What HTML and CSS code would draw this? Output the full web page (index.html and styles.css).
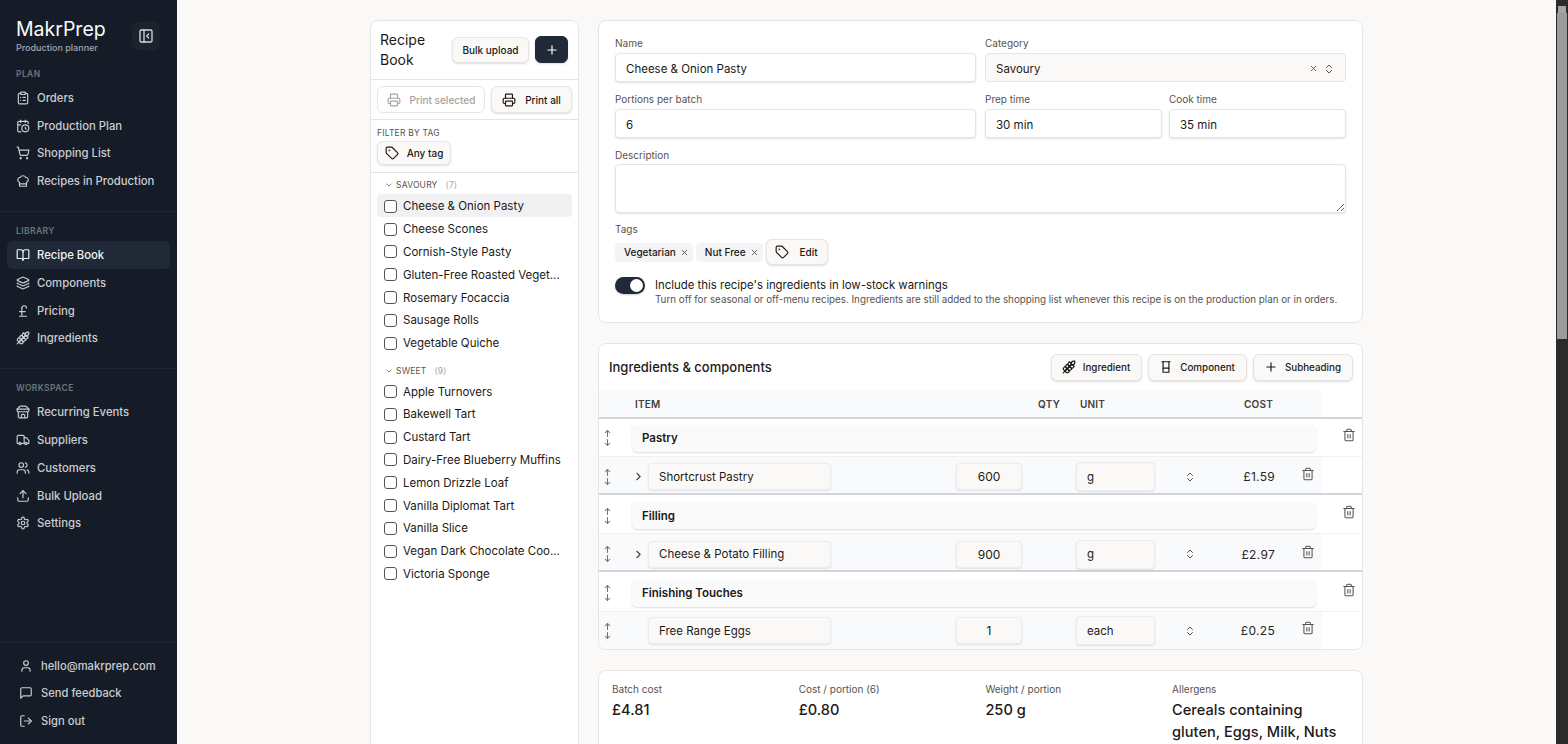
FILE: index.html
```html
<!DOCTYPE html>
<html lang="en">
<head>
    <meta charset="UTF-8">
    <title>MakrPrep - Recipe Book</title>
    <link rel="stylesheet" href="styles.css">
</head>
<body>
    <!-- Icon sprite -->
    <svg class="sprite" xmlns="http://www.w3.org/2000/svg">
        <symbol id="i-orders" viewBox="0 0 24 24"><rect x="8" y="2" width="8" height="4" rx="1"/><path d="M16 4h2a2 2 0 0 1 2 2v14a2 2 0 0 1-2 2H6a2 2 0 0 1-2-2V6a2 2 0 0 1 2-2h2"/><path d="M12 11h4M12 16h4M8 11h.01M8 16h.01"/></symbol>
        <symbol id="i-plan" viewBox="0 0 24 24"><path d="M21 7.5V6a2 2 0 0 0-2-2H5a2 2 0 0 0-2 2v14a2 2 0 0 0 2 2h3.5"/><path d="M16 2v4M8 2v4M3 10h5"/><path d="M17.5 17.5 16 16.3V14"/><circle cx="16" cy="16" r="6"/></symbol>
        <symbol id="i-cart" viewBox="0 0 24 24"><circle cx="8" cy="21" r="1"/><circle cx="19" cy="21" r="1"/><path d="M2.05 2.05h2l2.66 12.42a2 2 0 0 0 2 1.58h9.78a2 2 0 0 0 1.95-1.57l1.65-7.43H5.12"/></symbol>
        <symbol id="i-chef" viewBox="0 0 24 24"><path d="M17 21a1 1 0 0 0 1-1v-5.35c0-.457.316-.844.727-1.041a4 4 0 0 0-2.134-7.589 5 5 0 0 0-9.186 0 4 4 0 0 0-2.134 7.588c.411.198.727.585.727 1.041V20a1 1 0 0 0 1 1Z"/><path d="M6 17h12"/></symbol>
        <symbol id="i-book" viewBox="0 0 24 24"><path d="M12 7v14"/><path d="M3 18a1 1 0 0 1-1-1V4a1 1 0 0 1 1-1h5a4 4 0 0 1 4 4 4 4 0 0 1 4-4h5a1 1 0 0 1 1 1v13a1 1 0 0 1-1 1h-6a3 3 0 0 0-3 3 3 3 0 0 0-3-3z"/></symbol>
        <symbol id="i-layers" viewBox="0 0 24 24"><path d="M12.83 2.18a2 2 0 0 0-1.66 0L2.6 6.08a1 1 0 0 0 0 1.83l8.58 3.91a2 2 0 0 0 1.66 0l8.58-3.9a1 1 0 0 0 0-1.83z"/><path d="M2 12a1 1 0 0 0 .58.91l8.6 3.91a2 2 0 0 0 1.65 0l8.58-3.9A1 1 0 0 0 22 12"/><path d="M2 17a1 1 0 0 0 .58.91l8.6 3.91a2 2 0 0 0 1.65 0l8.58-3.9A1 1 0 0 0 22 17"/></symbol>
        <symbol id="i-pound" viewBox="0 0 24 24"><path d="M18 7c0-5.333-8-5.333-8 0"/><path d="M10 7v14M6 21h12M6 13h10"/></symbol>
        <symbol id="i-wheat" viewBox="0 0 24 24"><path d="M2 22 16 8"/><path d="M3.47 12.53 5 11l1.53 1.53a3.5 3.5 0 0 1 0 4.94L5 19l-1.53-1.53a3.5 3.5 0 0 1 0-4.94Z"/><path d="M7.47 8.53 9 7l1.53 1.53a3.5 3.5 0 0 1 0 4.94L9 15l-1.53-1.53a3.5 3.5 0 0 1 0-4.94Z"/><path d="M11.47 4.53 13 3l1.53 1.53a3.5 3.5 0 0 1 0 4.94L13 11l-1.53-1.53a3.5 3.5 0 0 1 0-4.94Z"/><path d="M20 2h2v2a4 4 0 0 1-4 4h-2V6a4 4 0 0 1 4-4Z"/><path d="M11.47 17.47 13 19l-1.53 1.53a3.5 3.5 0 0 1-4.94 0L5 19l1.53-1.53a3.5 3.5 0 0 1 4.94 0Z"/><path d="M15.47 13.47 17 15l-1.53 1.53a3.5 3.5 0 0 1-4.94 0L9 15l1.53-1.53a3.5 3.5 0 0 1 4.94 0Z"/><path d="M19.47 9.47 21 11l-1.53 1.53a3.5 3.5 0 0 1-4.94 0L13 11l1.53-1.53a3.5 3.5 0 0 1 4.94 0Z"/></symbol>
        <symbol id="i-store" viewBox="0 0 24 24"><path d="m2 7 4.41-4.41A2 2 0 0 1 7.83 2h8.34a2 2 0 0 1 1.42.59L22 7"/><path d="M4 12v8a2 2 0 0 0 2 2h12a2 2 0 0 0 2-2v-8"/><path d="M15 22v-4a2 2 0 0 0-2-2h-2a2 2 0 0 0-2 2v4"/><path d="M2 7h20"/><path d="M22 7v3a2 2 0 0 1-2 2a2.7 2.7 0 0 1-1.59-.63.7.7 0 0 0-.82 0A2.7 2.7 0 0 1 16 12a2.7 2.7 0 0 1-1.59-.63.7.7 0 0 0-.82 0A2.7 2.7 0 0 1 12 12a2.7 2.7 0 0 1-1.59-.63.7.7 0 0 0-.82 0A2.7 2.7 0 0 1 8 12a2.7 2.7 0 0 1-1.59-.63.7.7 0 0 0-.82 0A2.7 2.7 0 0 1 4 12a2 2 0 0 1-2-2V7"/></symbol>
        <symbol id="i-truck" viewBox="0 0 24 24"><path d="M14 18V6a2 2 0 0 0-2-2H4a2 2 0 0 0-2 2v11a1 1 0 0 0 1 1h2"/><path d="M15 18H9"/><path d="M19 18h2a1 1 0 0 0 1-1v-3.65a1 1 0 0 0-.22-.624l-3.48-4.35A1 1 0 0 0 17.52 8H14"/><circle cx="17" cy="18" r="2"/><circle cx="7" cy="18" r="2"/></symbol>
        <symbol id="i-users" viewBox="0 0 24 24"><path d="M16 21v-2a4 4 0 0 0-4-4H6a4 4 0 0 0-4 4v2"/><circle cx="9" cy="7" r="4"/><path d="M22 21v-2a4 4 0 0 0-3-3.87"/><path d="M16 3.13a4 4 0 0 1 0 7.75"/></symbol>
        <symbol id="i-upload" viewBox="0 0 24 24"><path d="M21 15v4a2 2 0 0 1-2 2H5a2 2 0 0 1-2-2v-4"/><path d="M17 8l-5-5-5 5"/><path d="M12 3v12"/></symbol>
        <symbol id="i-settings" viewBox="0 0 24 24"><path d="M12.22 2h-.44a2 2 0 0 0-2 2v.18a2 2 0 0 1-1 1.73l-.43.25a2 2 0 0 1-2 0l-.15-.08a2 2 0 0 0-2.73.73l-.22.38a2 2 0 0 0 .73 2.73l.15.1a2 2 0 0 1 1 1.72v.51a2 2 0 0 1-1 1.74l-.15.09a2 2 0 0 0-.73 2.73l.22.38a2 2 0 0 0 2.73.73l.15-.08a2 2 0 0 1 2 0l.43.25a2 2 0 0 1 1 1.73V20a2 2 0 0 0 2 2h.44a2 2 0 0 0 2-2v-.18a2 2 0 0 1 1-1.73l.43-.25a2 2 0 0 1 2 0l.15.08a2 2 0 0 0 2.73-.73l.22-.39a2 2 0 0 0-.73-2.73l-.15-.08a2 2 0 0 1-1-1.74v-.5a2 2 0 0 1 1-1.74l.15-.09a2 2 0 0 0 .73-2.73l-.22-.38a2 2 0 0 0-2.73-.73l-.15.08a2 2 0 0 1-2 0l-.43-.25a2 2 0 0 1-1-1.73V4a2 2 0 0 0-2-2z"/><circle cx="12" cy="12" r="3"/></symbol>
        <symbol id="i-user" viewBox="0 0 24 24"><path d="M19 21v-2a4 4 0 0 0-4-4H9a4 4 0 0 0-4 4v2"/><circle cx="12" cy="7" r="4"/></symbol>
        <symbol id="i-message" viewBox="0 0 24 24"><path d="M21 15a2 2 0 0 1-2 2H7l-4 4V5a2 2 0 0 1 2-2h14a2 2 0 0 1 2 2z"/></symbol>
        <symbol id="i-logout" viewBox="0 0 24 24"><path d="M9 21H5a2 2 0 0 1-2-2V5a2 2 0 0 1 2-2h4"/><path d="M16 17l5-5-5-5"/><path d="M21 12H9"/></symbol>
        <symbol id="i-panel" viewBox="0 0 24 24"><rect x="3" y="3" width="18" height="18" rx="2"/><path d="M9 3v18"/><path d="m16 15-3-3 3-3"/></symbol>
        <symbol id="i-printer" viewBox="0 0 24 24"><path d="M6 18H4a2 2 0 0 1-2-2v-5a2 2 0 0 1 2-2h16a2 2 0 0 1 2 2v5a2 2 0 0 1-2 2h-2"/><path d="M6 9V3a1 1 0 0 1 1-1h10a1 1 0 0 1 1 1v6"/><rect x="6" y="14" width="12" height="8" rx="1"/></symbol>
        <symbol id="i-tag" viewBox="0 0 24 24"><path d="M12.586 2.586A2 2 0 0 0 11.172 2H4a2 2 0 0 0-2 2v7.172a2 2 0 0 0 .586 1.414l8.704 8.704a2.426 2.426 0 0 0 3.42 0l6.58-6.58a2.426 2.426 0 0 0 0-3.42z"/><circle cx="7.5" cy="7.5" r=".5"/></symbol>
        <symbol id="i-trash" viewBox="0 0 24 24"><path d="M3 6h18"/><path d="M19 6v14c0 1-1 2-2 2H7c-1 0-2-1-2-2V6"/><path d="M8 6V4c0-1 1-2 2-2h4c1 0 2 1 2 2v2"/><path d="M10 11v6M14 11v6"/></symbol>
        <symbol id="i-updown" viewBox="0 0 24 24"><path d="m7 15 5 5 5-5"/><path d="m7 9 5-5 5 5"/></symbol>
        <symbol id="i-plus" viewBox="0 0 24 24"><path d="M5 12h14M12 5v14"/></symbol>
        <symbol id="i-x" viewBox="0 0 24 24"><path d="M18 6 6 18M6 6l12 12"/></symbol>
        <symbol id="i-down" viewBox="0 0 24 24"><path d="m6 9 6 6 6-6"/></symbol>
        <symbol id="i-right" viewBox="0 0 24 24"><path d="m9 18 6-6-6-6"/></symbol>
        <symbol id="i-cup" viewBox="0 0 24 24"><path d="M5 3h14"/><path d="M7 3v18h10V3"/><path d="M7 14h10"/></symbol>
        <symbol id="i-arrow-up" viewBox="0 0 24 24"><path d="m6 10 6-6 6 6"/><path d="M12 20V4"/></symbol>
        <symbol id="i-arrow-down" viewBox="0 0 24 24"><path d="M12 4v16"/><path d="m18 14-6 6-6-6"/></symbol>
    </svg>

    <div class="app">
        <aside class="sidebar">
            <div class="brand">
                <div>
                    <div class="brand-name">MakrPrep</div>
                    <div class="brand-sub">Production planner</div>
                </div>
                <button class="collapse"><svg class="ic"><use href="#i-panel"/></svg></button>
            </div>

            <div class="nav-group">
                <div class="nav-title">PLAN</div>
                <a class="nav-item"><svg class="ic"><use href="#i-orders"/></svg>Orders</a>
                <a class="nav-item"><svg class="ic"><use href="#i-plan"/></svg>Production Plan</a>
                <a class="nav-item"><svg class="ic"><use href="#i-cart"/></svg>Shopping List</a>
                <a class="nav-item"><svg class="ic"><use href="#i-chef"/></svg>Recipes in Production</a>
            </div>
            <div class="nav-group nav-divided">
                <div class="nav-title">LIBRARY</div>
                <a class="nav-item active"><svg class="ic"><use href="#i-book"/></svg>Recipe Book</a>
                <a class="nav-item"><svg class="ic"><use href="#i-layers"/></svg>Components</a>
                <a class="nav-item"><svg class="ic"><use href="#i-pound"/></svg>Pricing</a>
                <a class="nav-item"><svg class="ic"><use href="#i-wheat"/></svg>Ingredients</a>
            </div>
            <div class="nav-group nav-divided">
                <div class="nav-title">WORKSPACE</div>
                <a class="nav-item"><svg class="ic"><use href="#i-store"/></svg>Recurring Events</a>
                <a class="nav-item"><svg class="ic"><use href="#i-truck"/></svg>Suppliers</a>
                <a class="nav-item"><svg class="ic"><use href="#i-users"/></svg>Customers</a>
                <a class="nav-item"><svg class="ic"><use href="#i-upload"/></svg>Bulk Upload</a>
                <a class="nav-item"><svg class="ic"><use href="#i-settings"/></svg>Settings</a>
            </div>

            <div class="side-footer">
                <a class="foot-item"><svg class="ic"><use href="#i-user"/></svg>hello@makrprep.com</a>
                <a class="foot-item"><svg class="ic"><use href="#i-message"/></svg>Send feedback</a>
                <a class="foot-item"><svg class="ic"><use href="#i-logout"/></svg>Sign out</a>
            </div>
        </aside>

        <main class="main">
            <div class="content">
                <section class="list-panel">
                    <div class="list-head">
                        <h2>Recipe Book</h2>
                        <button class="btn btn-bulk">Bulk upload</button>
                        <button class="btn btn-dark"><svg class="ic"><use href="#i-plus"/></svg></button>
                    </div>
                    <div class="print-row">
                        <button class="btn btn-print disabled"><svg class="ic"><use href="#i-printer"/></svg>Print selected</button>
                        <button class="btn btn-print"><svg class="ic"><use href="#i-printer"/></svg>Print all</button>
                    </div>
                    <div class="tag-filter">
                        <div class="filter-label">FILTER BY TAG</div>
                        <button class="btn btn-tag"><svg class="ic"><use href="#i-tag"/></svg>Any tag</button>
                    </div>
                    <div class="recipes">
                        <div class="cat-head"><svg class="ic"><use href="#i-down"/></svg>SAVOURY <span>(7)</span></div>
                        <div class="recipe selected"><i class="check"></i>Cheese &amp; Onion Pasty</div>
                        <div class="recipe"><i class="check"></i>Cheese Scones</div>
                        <div class="recipe"><i class="check"></i>Cornish-Style Pasty</div>
                        <div class="recipe"><i class="check"></i>Gluten-Free Roasted Veget...</div>
                        <div class="recipe"><i class="check"></i>Rosemary Focaccia</div>
                        <div class="recipe"><i class="check"></i>Sausage Rolls</div>
                        <div class="recipe"><i class="check"></i>Vegetable Quiche</div>
                        <div class="cat-head cat-next"><svg class="ic"><use href="#i-down"/></svg>SWEET <span>(9)</span></div>
                        <div class="recipe"><i class="check"></i>Apple Turnovers</div>
                        <div class="recipe"><i class="check"></i>Bakewell Tart</div>
                        <div class="recipe"><i class="check"></i>Custard Tart</div>
                        <div class="recipe"><i class="check"></i>Dairy-Free Blueberry Muffins</div>
                        <div class="recipe"><i class="check"></i>Lemon Drizzle Loaf</div>
                        <div class="recipe"><i class="check"></i>Vanilla Diplomat Tart</div>
                        <div class="recipe"><i class="check"></i>Vanilla Slice</div>
                        <div class="recipe"><i class="check"></i>Vegan Dark Chocolate Coo...</div>
                        <div class="recipe"><i class="check"></i>Victoria Sponge</div>
                    </div>
                </section>

                <div class="detail">
                    <section class="card form-card">
                        <div class="form-row">
                            <label class="field"><span>Name</span><input class="input" value="Cheese &amp; Onion Pasty"></label>
                            <div class="field"><span>Category</span>
                                <div class="input select">Savoury
                                    <svg class="ic ic-x"><use href="#i-x"/></svg>
                                    <svg class="ic ic-updown"><use href="#i-updown"/></svg>
                                </div>
                            </div>
                        </div>
                        <div class="form-row">
                            <label class="field"><span>Portions per batch</span><input class="input" value="6"></label>
                            <div class="time-pair">
                                <label class="field"><span>Prep time</span><input class="input" value="30 min"></label>
                                <label class="field"><span>Cook time</span><input class="input" value="35 min"></label>
                            </div>
                        </div>
                        <label class="field field-desc"><span>Description</span><textarea class="input desc"></textarea></label>
                        <div class="field"><span>Tags</span>
                            <div class="tags">
                                <div class="tag">Vegetarian <svg class="ic"><use href="#i-x"/></svg></div>
                                <div class="tag">Nut Free <svg class="ic"><use href="#i-x"/></svg></div>
                                <button class="btn btn-edit"><svg class="ic"><use href="#i-tag"/></svg>Edit</button>
                            </div>
                        </div>
                        <div class="stock">
                            <div class="toggle"><b></b></div>
                            <div>
                                <div class="stock-title">Include this recipe's ingredients in low-stock warnings</div>
                                <div class="stock-note">Turn off for seasonal or off-menu recipes. Ingredients are still added to the shopping list whenever this recipe is on the production plan or in orders.</div>
                            </div>
                        </div>
                    </section>

                    <section class="card table-card">
                        <div class="table-top">
                            <h3>Ingredients &amp; components</h3>
                            <button class="btn btn-add"><svg class="ic"><use href="#i-wheat"/></svg>Ingredient</button>
                            <button class="btn btn-add"><svg class="ic"><use href="#i-cup"/></svg>Component</button>
                            <button class="btn btn-add"><svg class="ic"><use href="#i-plus"/></svg>Subheading</button>
                        </div>
                        <div class="table-head">
                            <div class="th-item">ITEM</div>
                            <div class="th-qty">QTY</div>
                            <div class="th-unit">UNIT</div>
                            <div class="th-cost">COST</div>
                        </div>

                        <div class="sub-row">
                            <div class="arrows"><svg class="ic"><use href="#i-arrow-up"/></svg><svg class="ic"><use href="#i-arrow-down"/></svg></div>
                            <div class="sub-input">Pastry</div>
                            <svg class="ic trash"><use href="#i-trash"/></svg>
                        </div>
                        <div class="item-row ruled">
                            <div class="arrows"><svg class="ic"><use href="#i-arrow-up"/></svg><svg class="ic"><use href="#i-arrow-down"/></svg></div>
                            <svg class="ic chev"><use href="#i-right"/></svg>
                            <div class="cell name">Shortcrust Pastry</div>
                            <div class="cell qty">600</div>
                            <div class="cell unit">g</div>
                            <svg class="ic updown"><use href="#i-updown"/></svg>
                            <div class="cost">£1.59</div>
                            <svg class="ic trash"><use href="#i-trash"/></svg>
                        </div>

                        <div class="sub-row">
                            <div class="arrows"><svg class="ic"><use href="#i-arrow-up"/></svg><svg class="ic"><use href="#i-arrow-down"/></svg></div>
                            <div class="sub-input">Filling</div>
                            <svg class="ic trash"><use href="#i-trash"/></svg>
                        </div>
                        <div class="item-row ruled">
                            <div class="arrows"><svg class="ic"><use href="#i-arrow-up"/></svg><svg class="ic"><use href="#i-arrow-down"/></svg></div>
                            <svg class="ic chev"><use href="#i-right"/></svg>
                            <div class="cell name">Cheese &amp; Potato Filling</div>
                            <div class="cell qty">900</div>
                            <div class="cell unit">g</div>
                            <svg class="ic updown"><use href="#i-updown"/></svg>
                            <div class="cost">£2.97</div>
                            <svg class="ic trash"><use href="#i-trash"/></svg>
                        </div>

                        <div class="sub-row">
                            <div class="arrows"><svg class="ic"><use href="#i-arrow-up"/></svg><svg class="ic"><use href="#i-arrow-down"/></svg></div>
                            <div class="sub-input">Finishing Touches</div>
                            <svg class="ic trash"><use href="#i-trash"/></svg>
                        </div>
                        <div class="item-row">
                            <div class="arrows"><svg class="ic"><use href="#i-arrow-up"/></svg><svg class="ic"><use href="#i-arrow-down"/></svg></div>
                            <div class="cell name">Free Range Eggs</div>
                            <div class="cell qty">1</div>
                            <div class="cell unit">each</div>
                            <svg class="ic updown"><use href="#i-updown"/></svg>
                            <div class="cost">£0.25</div>
                            <svg class="ic trash"><use href="#i-trash"/></svg>
                        </div>
                    </section>

                    <section class="card stats">
                        <div class="stat"><span>Batch cost</span><strong>£4.81</strong></div>
                        <div class="stat"><span>Cost / portion (6)</span><strong>£0.80</strong></div>
                        <div class="stat"><span>Weight / portion</span><strong>250 g</strong></div>
                        <div class="stat"><span>Allergens</span><strong>Cereals containing gluten, Eggs, Milk, Nuts</strong></div>
                    </section>
                </div>
            </div>
        </main>

        <div class="scrollbar"><div class="scroll-up"></div><div class="scroll-thumb"></div></div>
    </div>
</body>
</html>
```

FILE: styles.css
```css
* {
    box-sizing: border-box;
}
html, body {
    height: 100%;
    margin: 0;
    overflow: hidden;
}
body {
    font-family: Inter, "Liberation Sans", sans-serif;
    font-size: 11.4px;
    color: #1c1917;
    background: #faf9f7;
}
h2, h3 {
    margin: 0;
    font-weight: 500;
}
button {
    font-family: inherit;
}
.sprite {
    display: none;
}
.ic {
    width: 14px;
    height: 14px;
    flex: none;
    fill: none;
    stroke: currentColor;
    stroke-width: 2;
    stroke-linecap: round;
    stroke-linejoin: round;
}
.app {
    display: flex;
    height: 744px;
    overflow: hidden;
}

/* Sidebar */
.sidebar {
    width: 177px;
    flex: none;
    display: flex;
    flex-direction: column;
    height: 100%;
    background: #161c27;
    color: #c9ccd1;
}
.brand {
    display: flex;
    justify-content: space-between;
    align-items: center;
    padding: 18px 17px 0 16px;
}
.brand-name {
    font-size: 19.5px;
    line-height: 23px;
    color: #f8fafc;
}
.brand-sub {
    font-size: 9px;
    font-weight: 500;
    line-height: 12px;
    margin-top: 1px;
    color: #a3a7ae;
}
.collapse {
    width: 28px;
    height: 28px;
    padding: 0;
    display: flex;
    align-items: center;
    justify-content: center;
    color: #d5d7db;
    background: #1c232f;
    border: none;
    border-radius: 6px;
}
.collapse .ic {
    width: 16px;
    height: 16px;
}
.nav-group {
    padding: 14px 7px 0;
}
.nav-divided {
    margin-top: 16px;
    padding-top: 13px;
    border-top: 1px solid #1e2531;
}
.nav-title {
    padding: 0 9px;
    font-size: 8.5px;
    font-weight: 600;
    line-height: 12px;
    letter-spacing: 0.4px;
    color: #6e737c;
    margin-bottom: 4px;
}
.nav-item {
    display: flex;
    align-items: center;
    gap: 7px;
    height: 27.8px;
    padding: 0 9px;
    border-radius: 6px;
    font-size: 11.3px;
    font-weight: 500;
    white-space: nowrap;
}
.nav-item.active {
    background: #1f2937;
    color: #f1f3f5;
}
.side-footer {
    margin-top: auto;
    padding: 9px 7px 9px 19px;
    border-top: 1px solid #1e2531;
}
.foot-item {
    display: flex;
    align-items: center;
    gap: 8px;
    height: 27.7px;
    font-size: 11.2px;
    font-weight: 500;
}

/* Main layout */
.main {
    flex: 1;
    min-width: 0;
    overflow: hidden;
    padding-top: 20px;
}
.content {
    display: flex;
    gap: 19px;
    width: 993px;
    margin: 0 auto;
}
.scrollbar {
    width: 12px;
    flex: none;
    background: #2b2b2b;
    padding: 0 1px;
}
.scroll-up {
    height: 13px;
    margin: 0 1px;
    background: linear-gradient(to top, #a5a5a5 50%, transparent 50%);
}
.scroll-thumb {
    height: 326px;
    background: #9c9c9c;
}

/* Btns */
.btn {
    display: inline-flex;
    align-items: center;
    justify-content: center;
    font-size: 10px;
    font-weight: 500;
    color: #1c1917;
    background: #faf9f7;
    border: 1px solid #e7e5e4;
    border-radius: 6px;
    box-shadow: 0 1px 2px rgba(0, 0, 0, 0.14);
    padding: 0;
}

/* Recipe list */
.list-panel {
    width: 209px;
    flex: none;
    height: 760px;
    background: #fff;
    border: 1px solid #e7e5e4;
    border-radius: 8px;
}
.list-head {
    display: flex;
    align-items: center;
    height: 59px;
    padding: 0 9px;
    border-bottom: 1px solid #e7e5e4;
}
.list-head h2 {
    width: 72px;
    font-size: 14px;
    font-weight: 400;
    line-height: 20px;
}
.btn-bulk {
    width: 77px;
    height: 26px;
    margin-top: -1px;
}
.btn-dark {
    width: 33px;
    height: 27px;
    margin-left: 6px;
    margin-top: -1px;
    background: #1f2937;
    border-color: #1f2937;
    color: #fff;
}
.print-row {
    display: flex;
    gap: 6px;
    height: 40px;
    padding: 6px 6px;
    border-bottom: 1px solid #e7e5e4;
}
.btn-print {
    gap: 9px;
    height: 27px;
    width: 81px;
    flex: none;
}
.btn-print.disabled {
    width: 108px;
    color: #a8a29e;
    background: #fff;
    box-shadow: none;
}
.tag-filter {
    height: 53px;
    padding: 7px 6px 0;
    border-bottom: 1px solid #e7e5e4;
}
.filter-label {
    font-size: 8.5px;
    line-height: 12px;
    letter-spacing: 0.2px;
    color: #57534e;
    margin-bottom: 2px;
}
.btn-tag {
    width: 74px;
    height: 24px;
    gap: 8px;
}
.recipes {
    padding: 5px 6px;
}
.cat-head {
    display: flex;
    align-items: center;
    gap: 3px;
    height: 14px;
    padding-left: 8px;
    font-size: 8.5px;
    letter-spacing: 0.2px;
    color: #57534e;
    margin-bottom: 2px;
}
.cat-head .ic {
    width: 8px;
    height: 8px;
}
.cat-head span {
    margin-left: 5px;
    color: #a8a29e;
}
.cat-next {
    margin-top: 10.6px;
    margin-bottom: 1px;
}
.recipe {
    display: flex;
    align-items: center;
    gap: 6px;
    height: 22.8px;
    padding: 2px 0 0 7px;
    border-radius: 4px;
    font-size: 11.5px;
    color: #1c1917;
    white-space: nowrap;
}
.recipe.selected {
    background: #f1f1f4;
}
.check {
    width: 13px;
    height: 13px;
    flex: none;
    background: #fff;
    border: 1px solid #57534e;
    border-radius: 3px;
}

/* Recipe detail */
.detail {
    width: 765px;
    flex: none;
}
.card {
    background: #fff;
    border: 1px solid #e7e5e4;
    border-radius: 8px;
}
.form-card {
    height: 303px;
    padding: 16px 16px 0;
    margin-bottom: 20px;
}
.form-row {
    display: grid;
    grid-template-columns: 361px 1fr;
    gap: 9px;
    margin-bottom: 11px;
}
.time-pair {
    display: grid;
    grid-template-columns: 1fr 1fr;
    gap: 7px;
}
.field {
    display: block;
}
.field > span {
    display: block;
    font-size: 10px;
    line-height: 13px;
    color: #57534e;
    margin-bottom: 3px;
}
.input {
    display: block;
    width: 100%;
    height: 29px;
    padding: 2px 10px 0;
    font-family: inherit;
    font-size: 11.5px;
    color: #1c1917;
    background: #fff;
    border: 1px solid #e7e5e4;
    border-radius: 4px;
    box-shadow: 0 1px 2px rgba(0, 0, 0, 0.12);
    outline: none;
}
.select {
    display: flex;
    align-items: center;
    background: #faf9f7;
    box-shadow: none;
}
.ic-x {
    width: 9px;
    height: 9px;
    margin-left: auto;
    color: #57534e;
    stroke-width: 2.4;
}
.ic-updown {
    width: 12px;
    height: 12px;
    margin-left: 5px;
    color: #57534e;
}
.field-desc {
    margin-bottom: 10px;
}
.field-desc > span {
    margin-bottom: 2px;
}
.desc {
    height: 49px;
    resize: vertical;
}
.tags {
    display: flex;
    align-items: center;
    gap: 3px;
}
.tag {
    display: flex;
    align-items: center;
    gap: 4px;
    height: 19px;
    padding: 0 4px 0 9px;
    font-size: 10px;
    font-weight: 500;
    background: #f3f4f6;
    border-radius: 4px;
}
.tag .ic {
    width: 9px;
    height: 9px;
    color: #57534e;
    stroke-width: 2.4;
}
.btn-edit {
    width: 62px;
    height: 26px;
    gap: 10px;
}
.stock {
    display: flex;
    align-items: flex-start;
    gap: 10px;
    margin-top: 12px;
}
.toggle {
    width: 30px;
    height: 17px;
    flex: none;
    padding: 2px;
    display: flex;
    justify-content: flex-end;
    background: #1f2937;
    border-radius: 9px;
    box-shadow: 0 1px 2px rgba(0, 0, 0, 0.2);
}
.toggle b {
    width: 13px;
    height: 13px;
    background: #fff;
    border-radius: 50%;
}
.stock-title {
    margin-top: 1px;
    line-height: 14px;
}
.stock-note {
    margin-top: 1px;
    font-size: 9.8px;
    line-height: 14px;
    white-space: nowrap;
    color: #57534e;
}

/* Ingredients table */
.table-card {
    margin-bottom: 20px;
    overflow: hidden;
}
.table-top {
    display: flex;
    align-items: center;
    gap: 6px;
    height: 46px;
    padding: 0 9px 0 10px;
}
.table-top h3 {
    margin-right: auto;
    font-size: 13px;
}
.btn-add {
    height: 27px;
    padding: 0 11px 0 10px;
    gap: 7px;
    font-size: 9.8px;
}
.table-head {
    display: grid;
    grid-template-columns: 36px 355px 70px 20px 164px 78px;
    align-items: center;
    height: 27px;
    font-size: 10px;
    font-weight: 600;
    letter-spacing: 0.2px;
    color: #44403c;
    background: linear-gradient(to right, #f9fafb 723px, #fff 723px);
    box-shadow: 0 2px 0 #d1d5db;
    position: relative;
}
.th-item {
    grid-column: 2;
}
.th-qty {
    grid-column: 3;
    text-align: right;
}
.th-unit {
    grid-column: 5;
}
.th-cost {
    grid-column: 6;
}
.arrows {
    display: flex;
    flex-direction: column;
    align-items: center;
    width: 16px;
    color: #78716c;
}
.arrows .ic {
    width: 9px;
    height: 9px;
    stroke-width: 2.8;
}
.sub-row {
    display: grid;
    grid-template-columns: 33px 684px 47px;
    align-items: center;
    height: 39.5px;
    padding-top: 4px;
    border-bottom: 1px solid #f1f1f1;
}
.sub-input {
    display: flex;
    align-items: center;
    height: 27px;
    padding-left: 10px;
    font-size: 11.5px;
    font-weight: 600;
    background: #fafafa;
    border-radius: 5px;
    box-shadow: 0 1px 2px rgba(0, 0, 0, 0.14);
}
.sub-row .trash {
    margin-left: 26px;
    margin-top: -7px;
}
.trash {
    width: 14px;
    height: 14px;
    color: #57534e;
    stroke-width: 1.8;
}
.item-row {
    display: grid;
    grid-template-columns: 33px 16px 183px 125px 66px 54px 79px 70px 50px 47px;
    align-items: center;
    height: 37px;
    padding-top: 1px;
    background: linear-gradient(to right, #f9fafb 723px, #fff 723px);
}
.item-row.ruled {
    height: 38px;
    padding-top: 4px;
    border-bottom: 2px solid #d1d5db;
}
.item-row .trash {
    grid-column: 10;
    margin-left: 26px;
    margin-top: -5px;
}
.chev {
    width: 13px;
    height: 13px;
    color: #44403c;
}
.cell {
    display: flex;
    align-items: center;
    height: 27px;
    padding: 0 10px;
    font-size: 11.5px;
    background: #faf9f7;
    border: 1px solid #ececec;
    border-radius: 4px;
    box-shadow: 0 1px 2px rgba(0, 0, 0, 0.1);
}
.name {
    grid-column: 3;
}
.qty {
    grid-column: 5;
    justify-content: center;
    padding: 0;
    font-size: 12px;
}
.unit {
    grid-column: 7;
    height: 29px;
}
.updown {
    grid-column: 8;
    width: 12px;
    height: 12px;
    margin-left: 29px;
    color: #57534e;
}
.cost {
    grid-column: 9;
    text-align: right;
    font-size: 12px;
    letter-spacing: 0.3px;
    color: #292524;
}

/* Summary */
.stats {
    display: grid;
    grid-template-columns: repeat(4, 186.7px);
    padding: 12px 13px 0;
    height: 120px;
}
.stat {
    padding-right: 14px;
}
.stat > span {
    display: block;
    font-size: 10px;
    line-height: 13px;
    color: #57534e;
}
.stat > strong {
    display: block;
    margin-top: 3px;
    font-size: 14.6px;
    font-weight: 500;
    line-height: 22px;
    color: #1c1917;
}
```
